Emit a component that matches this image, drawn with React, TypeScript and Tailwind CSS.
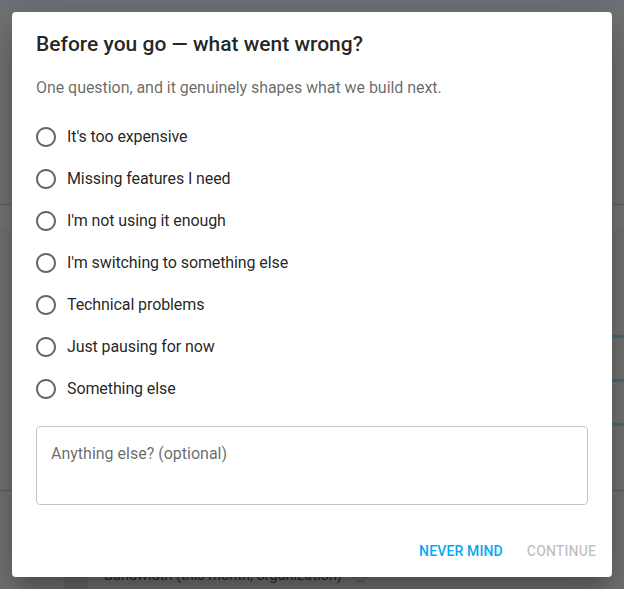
import React from "react";

const reasons = [
  "It's too expensive",
  "Missing features I need",
  "I'm not using it enough",
  "I'm switching to something else",
  "Technical problems",
  "Just pausing for now",
  "Something else",
];

function RadioIcon() {
  return (
    <svg viewBox="0 0 24 24" className="h-6 w-6 fill-[rgba(0,0,0,0.6)]">
      <path d="M12 2C6.48 2 2 6.48 2 12s4.48 10 10 10 10-4.48 10-10S17.52 2 12 2zm0 18c-4.42 0-8-3.58-8-8s3.58-8 8-8 8 3.58 8 8-3.58 8-8 8z" />
    </svg>
  );
}

function Backdrop() {
  return (
    <div className="flex h-full flex-col">
      <div className="h-[10px] bg-[#6e7178]" />
      <div className="h-[195px] border-b border-[#626262]" />
      <div className="h-[24px] bg-[#777777]" />
      <div className="flex h-[261px] flex-col items-end gap-[41px] pt-[106px]">
        <div className="h-[3px] w-3 bg-[#4b6a7a]" />
        <div className="h-[3px] w-3 bg-[#4b6a7a]" />
        <div className="h-[3px] w-3 bg-[#4b6a7a]" />
      </div>
      <div className="h-[24px] border-t border-[#5e5e5e]" />
      <div className="flex flex-1">
        <div className="w-16" />
        <div className="w-6 bg-[#6b6b6b]" />
        <div className="flex items-start gap-3 pl-4 pt-[50px] text-[14.5px] leading-6 text-[#2b2b2b]">
          <span>Bandwidth (this month, organization)</span>
          <span className="mt-[6px] flex h-3 w-3 items-center justify-center rounded-full border border-[#555] text-[8px] leading-none text-[#555]">
            ?
          </span>
        </div>
      </div>
    </div>
  );
}

export default function App() {
  return (
    <div className="relative h-[589px] w-[624px] overflow-hidden bg-[#747474] font-['Roboto','Liberation_Sans',sans-serif]">
      <Backdrop />

      {/* Dialog */}
      <div className="absolute inset-0 flex items-center justify-center">
        <div className="flex h-[565px] w-[600px] flex-col rounded bg-white shadow-[0_11px_15px_-7px_rgba(0,0,0,0.2),0_24px_38px_3px_rgba(0,0,0,0.14),0_9px_46px_8px_rgba(0,0,0,0.12)]">
          <h2 className="px-6 py-4 text-[21px] font-medium leading-8 text-[rgba(0,0,0,0.87)]">
            Before you go — what went wrong?
          </h2>

          <div className="px-6 pb-5">
            <p className="text-base leading-6 tracking-[-0.05px] text-[rgba(0,0,0,0.6)]">
              One question, and it genuinely shapes what we build next.
            </p>

            <div className="mt-4 flex flex-col">
              {reasons.map((reason) => (
                <label key={reason} className="-ml-[11px] flex h-[42px] cursor-pointer items-center">
                  <span className="p-[9px]">
                    <RadioIcon />
                  </span>
                  <span className="text-base leading-6 tracking-[-0.1px] text-[rgba(0,0,0,0.87)]">
                    {reason}
                  </span>
                </label>
              ))}
            </div>

            <textarea
              rows={2}
              placeholder="Anything else? (optional)"
              className="mt-4 block h-[79px] w-full resize-none rounded border border-[#c4c4c4] px-[14px] pt-[15px] pb-[18px] text-base leading-[23px] text-[rgba(0,0,0,0.87)] outline-none placeholder:text-[rgba(0,0,0,0.6)]"
            />
          </div>

          <div className="flex justify-end gap-2 p-2">
            <button className="min-w-16 rounded px-2 py-1.5 text-sm font-medium uppercase leading-6 tracking-[0.01em] text-[#03a9f4]">
              Never mind
            </button>
            <button disabled className="min-w-16 rounded px-2 py-1.5 text-sm font-medium uppercase leading-6 tracking-[0.01em] text-[rgba(0,0,0,0.26)]">
              Continue
            </button>
          </div>
        </div>
      </div>
    </div>
  );
}
